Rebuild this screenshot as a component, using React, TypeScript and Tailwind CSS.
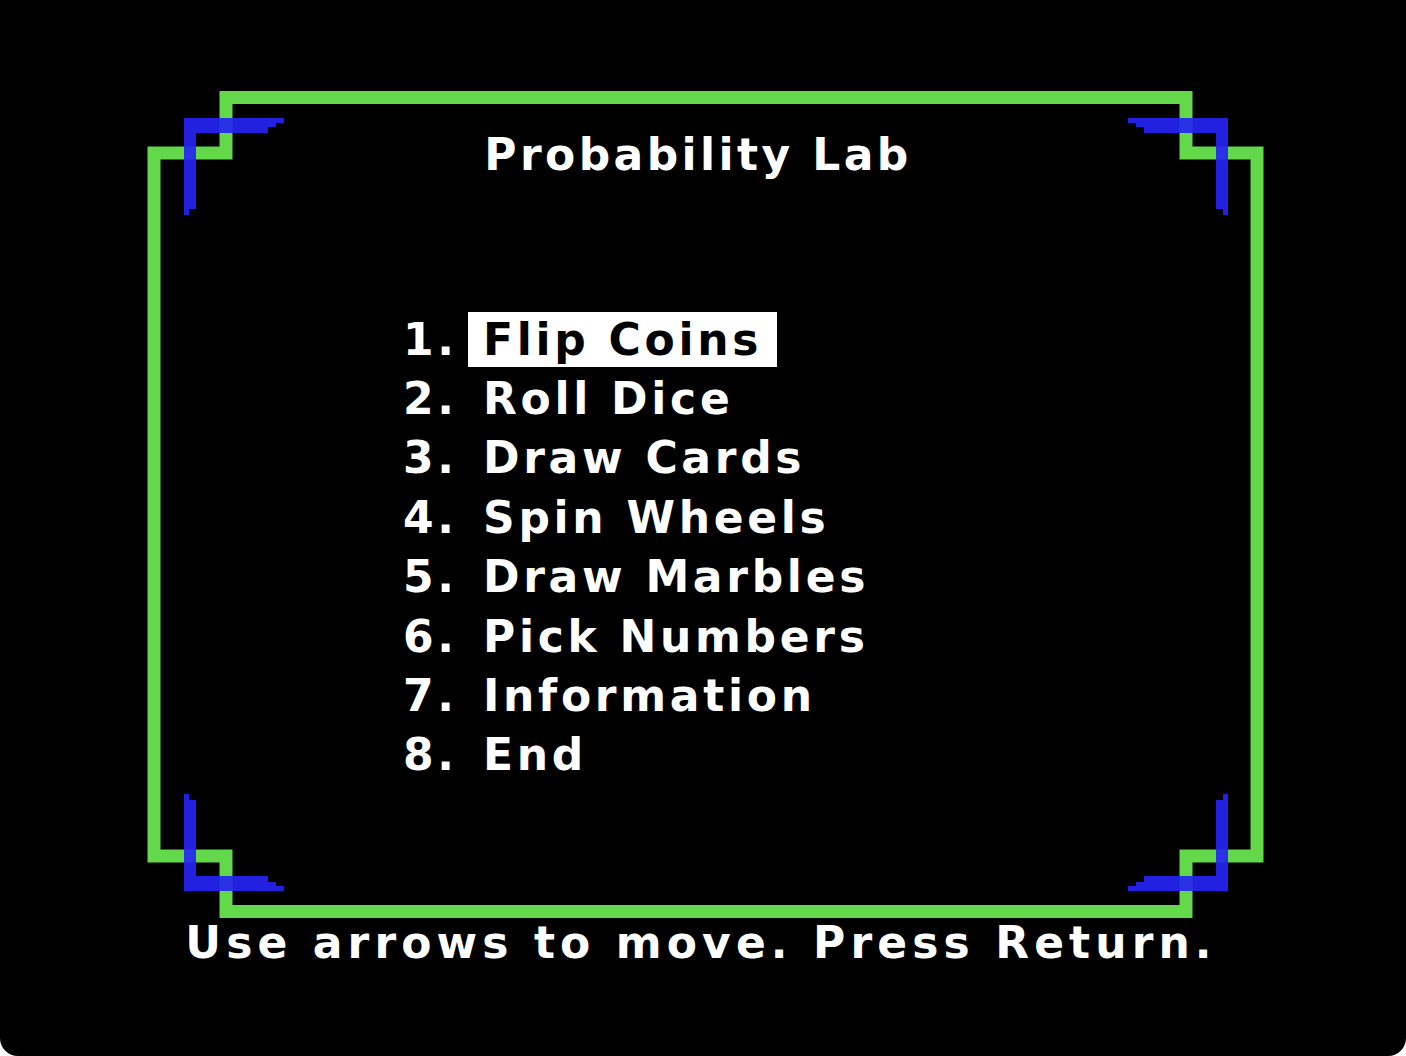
import React from "react";

const items = [
  "Flip Coins",
  "Roll Dice",
  "Draw Cards",
  "Spin Wheels",
  "Draw Marbles",
  "Pick Numbers",
  "Information",
  "End",
];

// one blue corner bracket, drawn for the top-left; the others are mirrored
const bracket =
  "184,118 284,118 284,123 276,123 276,127 268,127 268,133 196,133 196,209 189,209 189,215 184,215";

function Frame() {
  return (
    <svg
      className="absolute inset-0 pointer-events-none"
      width="1406"
      height="1056"
      viewBox="0 0 1406 1056"
    >
      <path
        d="M226 97.5 H1186 V153 H1257 V856 H1186 V911.5 H226 V856 H154 V153 H226 Z"
        fill="none"
        stroke="#63d84a"
        strokeWidth="13"
        strokeLinejoin="miter"
      />
      <g fill="#2424f2" fillOpacity="0.92">
        <polygon points={bracket} />
        <polygon points={bracket} transform="translate(1412 0) scale(-1 1)" />
        <polygon points={bracket} transform="translate(0 1009) scale(1 -1)" />
        <polygon points={bracket} transform="translate(1412 1009) scale(-1 -1)" />
      </g>
    </svg>
  );
}

export default function App() {
  return (
    <div className="w-full h-[1056px] bg-white">
      <div
        className="relative h-full bg-black rounded-b-[18px] overflow-hidden text-white"
        style={{ fontFamily: '"DejaVu Sans", sans-serif' }}
      >
        <Frame />
        <div className="relative flex flex-col pt-[133px]">
          <h1 className="self-center mr-[10px] text-[44px] leading-[44px] font-bold tracking-[3.4px]">
            Probability Lab
          </h1>

          <ul className="mt-[133px] pl-[403px] flex flex-col">
            {items.map((item, i) => (
              <li
                key={item}
                className="h-[59.4px] flex items-center text-[44px] leading-[44px] font-bold tracking-[3.7px]"
              >
                <span className="w-[65px]">{i + 1}.</span>
                <span
                  className={
                    i === 0
                      ? "h-[55px] flex items-center px-[15px] bg-white text-black"
                      : "px-[15px]"
                  }
                >
                  {item}
                </span>
              </li>
            ))}
          </ul>

          <p className="mt-[136px] self-center mr-[4px] text-[44px] leading-[44px] font-bold tracking-[5.1px]">
            Use arrows to move. Press Return.
          </p>
        </div>
      </div>
    </div>
  );
}
